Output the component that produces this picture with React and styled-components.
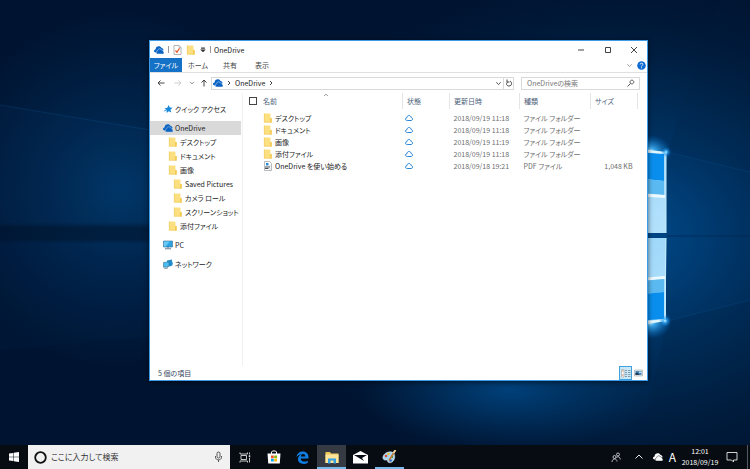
import React from 'react'
import styled, { createGlobalStyle, css } from 'styled-components'

const GlobalStyle = createGlobalStyle`
	* {
		box-sizing: border-box;
	}
	body {
		margin: 0;
		font-family: "Noto Sans CJK JP", "Open Sans", sans-serif;
		font-size: 7px;
		line-height: 12px;
		font-feature-settings: "palt";
		color: #222;
	}
	button, input {
		font: inherit;
		font-feature-settings: inherit;
		color: inherit;
		margin: 0;
		padding: 0;
		border: 0;
		background: none;
	}
	svg {
		display: block;
		flex: none;
	}
`

const Screen = styled.div`
	position: relative;
	display: flex;
	flex-direction: column;
	min-height: 100vh;
	background: #001634;
	overflow: hidden;
`
const WallpaperSvg = styled.svg`
	position: absolute;
	top: 0;
	left: 0;
	width: 100%;
	height: 100%;
`
const Desktop = styled.main`
	position: relative;
	flex: 1;
	display: flex;
	padding: 40px 102px 64px 149px;
`

/* explorer window */
const Window = styled.section`
	flex: 1;
	display: flex;
	flex-direction: column;
	min-width: 0;
	background: #fff;
	border: 1px solid #3c9be6;
	box-shadow: 0 1px 5px rgba(0, 0, 0, 0.6);
`
const TitleBar = styled.header`
	display: flex;
	align-items: center;
	height: 17px;
	padding-left: 4px;
`
const QuickTools = styled.div`
	display: flex;
	align-items: center;
	gap: 4px;
	margin-right: 3px;
`
const Divider = styled.span`
	width: 1px;
	height: 7px;
	background: #999;
`
const Title = styled.h1`
	flex: 1;
	margin: 0;
	font-size: 7px;
	font-weight: normal;
`
const IconButton = styled.button`
	display: flex;
	align-items: center;
	justify-content: center;
	flex: none;
	width: ${props => props.$width || 12}px;
	height: ${props => props.$height || 12}px;
	${props => props.$active && css`
		background: #cbe8f8;
		border: 1px solid #3fa2dc;
	`}
`
const Ribbon = styled.nav`
	display: flex;
	align-items: center;
	height: 15px;
	border-bottom: 1px solid #dfe0e1;
`
const Tab = styled.button`
	width: 32px;
	height: 14px;
	text-align: center;
	white-space: nowrap;
	color: ${props => props.$main ? '#fff' : '#444'};
	background: ${props => props.$main ? '#1572c6' : 'none'};
`
const Spacer = styled.span`
	flex: 1;
`
const NavBar = styled.div`
	display: flex;
	align-items: center;
	height: 20px;
	padding: 0 7px 0 4px;
`
const AddressBar = styled.div`
	flex: 1;
	display: flex;
	align-items: center;
	height: 13px;
	padding-left: 1px;
	border: 1px solid #d9d9d9;
`
const Crumb = styled.a`
	color: inherit;
	text-decoration: none;
`
const Refresh = styled(IconButton)`
	border-left: 1px solid #d9d9d9;
`
const SearchBox = styled.label`
	display: flex;
	align-items: center;
	width: 119px;
	height: 13px;
	margin-left: 7px;
	padding: 0 4px 0 5px;
	border: 1px solid #d9d9d9;
`
const SearchInput = styled.input`
	flex: 1;
	min-width: 0;
	height: 11px;
	outline: none;
	&::placeholder {
		color: ${props => props.$dark ? '#333' : '#777'};
		opacity: 1;
	}
`
const Body = styled.div`
	flex: 1;
	display: flex;
	min-height: 0;
`
const Sidebar = styled.nav`
	width: 93px;
	padding: 9px 1px 0 0;
	border-right: 1px solid #f1f1f1;
`
const Tree = styled.ul`
	margin: 0 0 5px;
	padding: 0;
	list-style: none;
`
const TreeItem = styled.a`
	display: flex;
	align-items: center;
	gap: 2px;
	height: 14px;
	padding-left: ${props => [13, 18, 23][props.$level]}px;
	color: inherit;
	text-decoration: none;
	white-space: nowrap;
	background: ${props => props.$selected ? '#d9d9d9' : 'none'};
`
const Files = styled.div`
	flex: 1;
	min-width: 0;
	padding-right: 9px;
`
const Table = styled.table`
	width: 100%;
	border-collapse: collapse;
	table-layout: fixed;
`
const Col = styled.col`
	width: ${props => props.$width ? props.$width + 'px' : 'auto'};
`
const HeadCell = styled.th`
	position: relative;
	height: 16px;
	padding: 0 0 0 ${props => props.$flush ? 0 : 4}px;
	font-weight: normal;
	text-align: left;
	color: #4c607a;
	border-right: ${props => props.$line ? '1px solid #e5e5e5' : 0};
`
const SortMark = styled.span`
	position: absolute;
	top: 0;
	left: 60px;
`
const Checkbox = styled.input`
	display: block;
	appearance: none;
	width: 8px;
	height: 8px;
	margin-left: 6px;
	border: 1px solid #444;
	background: #fff;
`
const Gap = styled.tr`
	height: 3px;
`
const Cell = styled.td`
	height: 12px;
	padding: 0 ${props => props.$right ? 5 : 0}px 0 ${props => props.$flush ? 0 : 4}px;
	color: ${props => props.$name ? '#222' : '#6d6d6d'};
	text-align: ${props => props.$right ? 'right' : 'left'};
	white-space: nowrap;
`
const FileName = styled.span`
	display: flex;
	align-items: center;
	gap: 2px;
`
const StatusBar = styled.footer`
	display: flex;
	align-items: center;
	height: 14px;
	padding: 0 2px 0 8px;
	color: #33475f;
`

/* taskbar */
const Taskbar = styled.footer`
	position: relative;
	display: flex;
	height: 24px;
	background: #070b12;
	color: #fff;
`
const TaskButton = styled.button`
	display: flex;
	align-items: center;
	justify-content: center;
	width: 29px;
	height: 24px;
	background: ${props => props.$active ? '#363b43' : 'none'};
	border-bottom: ${props => props.$running ? '2px solid #76b9ed' : 0};
	padding-top: ${props => props.$running ? 2 : 0}px;
`
const StartButton = styled(TaskButton)`
	width: 28px;
`
const TaskSearch = styled.label`
	display: flex;
	align-items: center;
	gap: 4px;
	width: 202px;
	padding: 0 7px 0 6px;
	background: #f1f1f1;
	color: #333;
	font-size: 8px;
`
const Tray = styled.div`
	display: flex;
	align-items: center;
	margin-left: auto;
`
const InputMode = styled.button`
	width: 13px;
	font-size: 12px;
	text-align: center;
`
const Clock = styled.time`
	width: 42px;
	line-height: 11px;
	text-align: center;
`
const ShowDesktop = styled.button`
	width: 3px;
	height: 24px;
	margin-left: 4px;
	border-left: 1px solid #565b63;
`

const Wallpaper = () => (
	<WallpaperSvg viewBox="0 0 750 469" preserveAspectRatio="none" aria-hidden="true">
		<defs>
			<radialGradient id="glow" gradientUnits="userSpaceOnUse" cx="610" cy="235" r="360" gradientTransform="translate(0 60) scale(1 0.75)">
				<stop offset="0" stopColor="#004f94" />
				<stop offset="0.25" stopColor="#003c73" />
				<stop offset="0.6" stopColor="#002850" stopOpacity="0.8" />
				<stop offset="1" stopColor="#001634" stopOpacity="0" />
			</radialGradient>
			<radialGradient id="left" gradientUnits="userSpaceOnUse" cx="120" cy="190" r="180">
				<stop offset="0" stopColor="#003566" />
				<stop offset="1" stopColor="#002a55" stopOpacity="0" />
			</radialGradient>
			<radialGradient id="floor" gradientUnits="userSpaceOnUse" cx="510" cy="390" r="150" gradientTransform="translate(0 234) scale(1 0.4)">
				<stop offset="0" stopColor="#00407a" />
				<stop offset="1" stopColor="#003566" stopOpacity="0" />
			</radialGradient>
			<radialGradient id="spark">
				<stop offset="0" stopColor="#e8fbff" />
				<stop offset="0.25" stopColor="#42b8ff" stopOpacity="0.85" />
				<stop offset="1" stopColor="#0070d0" stopOpacity="0" />
			</radialGradient>
			<linearGradient id="pane" x1="0" y1="0" x2="1" y2="1">
				<stop offset="0" stopColor="#8dd0f8" />
				<stop offset="1" stopColor="#b5e2fc" />
			</linearGradient>
			<linearGradient id="band" x1="0" y1="0" x2="0" y2="1">
				<stop offset="0" stopColor="#00142d" stopOpacity="0" />
				<stop offset="0.3" stopColor="#00142d" stopOpacity="0.6" />
				<stop offset="0.8" stopColor="#00142d" stopOpacity="0.5" />
				<stop offset="1" stopColor="#00142d" stopOpacity="0" />
			</linearGradient>
		</defs>
		<rect width="750" height="469" fill="#001431" />
		<rect width="750" height="469" fill="url(#left)" />
		<rect width="750" height="469" fill="url(#glow)" />
		<ellipse cx="510" cy="390" rx="150" ry="60" fill="url(#floor)" />
		<path d="M0 105 L150 130 V225 H0Z" fill="#0a5596" opacity="0.06" />
		<path d="M0 350 L150 337 V240 H0Z" fill="#0a5596" opacity="0.04" />
		<path d="M0 222 H150 V244 H0Z" fill="url(#band)" />
		<path d="M0 105 L150 130" stroke="#1470b8" opacity="0.2" />
		<path d="M667 152 L750 172 V0 H720Z" fill="#001d40" opacity="0.12" />
		<path d="M667 321 L750 300 V445 H640Z" fill="#001d40" opacity="0.16" />
		<path d="M667 152 L750 172 M667 321 L750 300" stroke="#1470b8" strokeWidth="1" opacity="0.16" />
		<path d="M667 236 H750" stroke="#002650" strokeWidth="2" opacity="0.35" />
		<ellipse cx="650" cy="152" rx="22" ry="17" fill="url(#spark)" />
		<ellipse cx="650" cy="322" rx="22" ry="17" fill="url(#spark)" />
		<path d="M560 147 L666 153 V233 H560Z" fill="url(#pane)" />
		<path d="M560 147 L664 154 V181 L560 170Z" fill="#0a8eed" />
		<path d="M560 170 L664 181 V195 L560 188Z" fill="#5bb9f1" />
		<path d="M560 187 L665 195 V198 L560 191Z" fill="#eefaff" />
		<path d="M560 238 H666 V321 L560 330Z" fill="url(#pane)" />
		<path d="M560 285 L665 276 V279 L560 288Z" fill="#eefaff" />
		<path d="M560 288 L664 279 V292 L560 302Z" fill="#5bb9f1" />
		<path d="M560 302 L664 292 V319 L560 326Z" fill="#0a8eed" />
		<path d="M640 149 L667 152 V154 L640 152Z M640 322 L665 319 L667 321 L640 325Z" fill="#e0f7ff" />
		<path d="M666 152 V233 M666 238 L665 321" stroke="#c4edff" strokeWidth="1" />
		<circle cx="666" cy="152" r="5" fill="url(#spark)" />
		<circle cx="665" cy="321" r="6" fill="url(#spark)" />
	</WallpaperSvg>
)

const OneDriveIcon = ({ color = '#0a64c4', edge = '#fff', size = 10 }) => (
	<svg width={size} height={size} viewBox="0 0 20 20">
		<path d="M4.500 15H3C1.200 15 0 13.500 0 12C0 10.200 1.300 9 3 8.800C3.500 5 6 2.500 9.500 2.500C12 2.500 14 3.800 15 6C17.500 6 19 8 19 10.500L10 15Z" fill={color} />
		<path d="M8 18C6 18 4.500 16.600 4.500 14.800C4.500 13 5.700 11.700 7.300 11.500C7.600 9 9.300 7.500 11.500 7.500C13.300 7.500 14.600 8.500 15.300 10C17.300 10 18.500 11.500 18.500 13C19.500 13.400 20 14.300 20 15.500C20 17 19.200 18 18 18Z" fill={color} stroke={edge} strokeWidth="0.900" />
	</svg>
)

const FolderIcon = ({ size = 10 }) => (
	<svg width={size} height={size} viewBox="0 0 20 20">
		<path d="M2 1H14L15 2V10H17V19H2Z" fill="#fbdf80" />
		<path d="M14 10H17.500V19H14Z" fill="#f3ca52" />
		<path d="M2.500 1V18.500H17" fill="none" stroke="#edc652" strokeWidth="1" />
	</svg>
)

const PropertiesIcon = () => (
	<svg width="9" height="10" viewBox="0 0 18 20">
		<path d="M2 1H12L16 5V19H2Z" fill="#fff" stroke="#8d8d8d" strokeWidth="1.300" />
		<path d="M12 1V5H16" fill="none" stroke="#8d8d8d" />
		<path d="M5 11L8 14.500L13 6.500" fill="none" stroke="#e3541e" strokeWidth="2.400" />
	</svg>
)

const PdfIcon = () => (
	<svg width="10" height="10" viewBox="0 0 20 20">
		<path d="M3 1H13L17 5V19H3Z" fill="#fff" stroke="#8b8f94" strokeWidth="1.200" />
		<path d="M6 4H11V9H6Z" fill="#2a8bd8" />
		<path d="M4 12H14M4 15H11" stroke="#49525c" strokeWidth="2" />
		<path d="M13 10H15M13 16H15" stroke="#8b8f94" strokeWidth="1.500" />
	</svg>
)

const CloudIcon = () => (
	<svg width="8" height="8" viewBox="0 0 16 16">
		<path d="M4.500 13C2.200 13 1 11.800 1 10.200C1 8.600 2.200 7.500 3.700 7.500C4 4.800 5.700 3 8 3C10.200 3 11.800 4.500 12.200 7C14 7 15 8.300 15 10C15 11.800 13.800 13 12 13Z" fill="none" stroke="#1b80d6" strokeWidth="1.900" />
	</svg>
)

const StarIcon = () => (
	<svg width="10" height="10" viewBox="0 0 20 20">
		<path d="M11.500 2L13.500 7L19 7.500L15 11.500L16.500 17L11.500 14.500L7 18L7.500 12.500L3 9L8.500 7.500Z" fill="#1688dc" />
		<path d="M2 14L7 12.500" stroke="#4aa7e6" strokeWidth="2" />
	</svg>
)

const PcIcon = () => (
	<svg width="10" height="10" viewBox="0 0 20 20">
		<path d="M1 2H19V14H1Z" fill="#2ba2e4" stroke="#3a7190" strokeWidth="1.200" />
		<path d="M2 3H14L5 13H2Z" fill="#66caf5" />
		<path d="M8 14H12V16H8Z" fill="#8aa4b2" />
		<path d="M4 17.500H16" stroke="#5f7f90" strokeWidth="2" />
	</svg>
)

const NetworkIcon = () => (
	<svg width="10" height="10" viewBox="0 0 20 20">
		<path d="M8 3L18 1V12L8 14Z" fill="#2d86bf" />
		<circle cx="14" cy="9" r="5.500" fill="#1f8fd0" />
		<path d="M1 7L12 5.500V15L1 16.500Z" fill="#4bbcf0" stroke="#2b6f99" strokeWidth="1.200" />
		<path d="M3 19L10 17.500" stroke="#5b7d92" strokeWidth="2" />
	</svg>
)

const LineIcon = ({ d, size = 8, color = '#444', width = 2 }) => (
	<svg width={size} height={size} viewBox="0 0 16 16">
		<path d={d} fill="none" stroke={color} strokeWidth={width} />
	</svg>
)

const chevronDown = 'M3 5L8 10.500L13 5'
const chevronRight = 'M6 4L10 8L6 12'
const arrowLeft = 'M15 8H2M7 3L2 8L7 13'
const arrowRight = 'M1 8H14M9 3L14 8L9 13'
const arrowUp = 'M8 15V2M3 7L8 2L13 7'

const HelpIcon = () => (
	<svg width="9" height="9" viewBox="0 0 18 18">
		<circle cx="9" cy="9" r="8.500" fill="#0a6ad0" />
		<path d="M6.300 7C6.300 3.500 11.800 3.500 11.800 6.800C11.800 9 9 8.700 9 11M9 12.500V14.500" fill="none" stroke="#fff" strokeWidth="1.800" />
	</svg>
)

const DetailsViewIcon = () => (
	<svg width="10" height="9" viewBox="0 0 20 18">
		<path d="M1 1H6V16H1Z" fill="#fff" stroke="#8e8e8e" />
		<path d="M2 4H5M2 12H5" stroke="#d78067" strokeWidth="2" />
		<path d="M8 3H12M14 3H19M8 7H12M14 7H19M8 11H12M14 11H19M8 15H12M14 15H19" stroke="#68818f" strokeWidth="1.500" />
	</svg>
)

const LargeViewIcon = () => (
	<svg width="9" height="8" viewBox="0 0 18 16">
		<path d="M1 2H17V14H1Z" fill="#e9eef2" stroke="#8b949b" />
		<path d="M3 4H15V12H3Z" fill="#4b88b8" />
		<path d="M3 12V8L7 7L11 12Z" fill="#1f3a54" />
		<path d="M10 5H15V8H10Z" fill="#b7dcf3" />
	</svg>
)

const WindowsIcon = () => (
	<svg width="10" height="10" viewBox="0 0 20 20" fill="#fff">
		<path d="M0 3L8.500 1.800V9.500H0Z M9.500 1.600L20 0V9.500H9.500Z M0 10.500H8.500V18.200L0 17Z M9.500 10.500H20V20L9.500 18.400Z" />
	</svg>
)

const CortanaIcon = () => (
	<svg width="13" height="13" viewBox="0 0 13 13">
		<circle cx="6.500" cy="6.500" r="5.300" fill="none" stroke="#111" strokeWidth="1.800" />
	</svg>
)

const MicIcon = () => (
	<svg width="9" height="12" viewBox="0 0 18 24" fill="none" stroke="#444" strokeWidth="1.800">
		<rect x="6" y="2" width="6" height="12" rx="3" />
		<path d="M3 10V13C3 19 15 19 15 13V10M9 18V22" />
	</svg>
)

const TaskViewIcon = () => (
	<svg width="12" height="11" viewBox="0 0 24 22" fill="none" stroke="#dcdcdc" strokeWidth="1.800">
		<path d="M4 7H15V15H4Z M2 1V4H17V1 M2 21V18H17V21 M21 1V5 M21 12V21" />
		<path d="M21 6.500V10.500" strokeWidth="3" />
	</svg>
)

const StoreIcon = () => (
	<svg width="14" height="14" viewBox="0 0 28 28">
		<path d="M9 8V4C9 1 19 1 19 4V8" fill="none" stroke="#fff" strokeWidth="2" />
		<path d="M1 7H27L25.500 27H2.500Z" fill="#fff" />
		<path d="M8 11H13.500V16.500H8Z" fill="#f25022" />
		<path d="M14.500 11H20V16.500H14.500Z" fill="#7fba00" />
		<path d="M8 17.500H13.500V23H8Z" fill="#00a4ef" />
		<path d="M14.500 17.500H20V23H14.500Z" fill="#ffb900" />
	</svg>
)

const EdgeIcon = () => (
	<svg width="13" height="13" viewBox="0 0 26 26">
		<path d="M1 12C2 5 7 1 13.500 1C21 1 25 6 25 12.500V15H9.500C9.700 22 18 22.500 23.500 19.300V24C15 28 4 25.500 4 16C4 11.500 7 8 11 6.500C6.500 7 3 9 1 12ZM9.700 10.800H18.500C18.500 4.500 10.400 4.800 9.700 10.800Z" fill="#0f7ee0" />
	</svg>
)

const ExplorerIcon = () => (
	<svg width="14" height="13" viewBox="0 0 28 26">
		<path d="M1 2H10L12 5H27V24H1Z" fill="#f0c75b" />
		<path d="M1 7H27V24H1Z" fill="#fde59c" />
		<path d="M6 25V15H22V25H17V19H11V25Z" fill="#35a0e4" />
	</svg>
)

const MailIcon = () => (
	<svg width="15" height="13" viewBox="0 0 30 26">
		<path d="M0 8L15 0L30 8V25H0Z" fill="#fff" />
		<path d="M2 8H28L18 14L22 20L12 14Z" fill="#070b12" />
	</svg>
)

const PaintIcon = () => (
	<svg width="15" height="14" viewBox="0 0 30 28">
		<path d="M13 4C23 2 27 9 25 17C23 26 12 28 11 22C10 18 8 21 5 20C-2 17 3 6 13 4Z" fill="#a9d4ee" stroke="#e9f5fb" />
		<circle cx="8" cy="12" r="2.500" fill="#d84a2d" />
		<circle cx="13" cy="8" r="2.300" fill="#f5c021" />
		<circle cx="20" cy="14" r="2.300" fill="#3a9b43" />
		<circle cx="17" cy="21" r="2.500" fill="#265fbd" />
		<path d="M14 21L24 5" stroke="#c9772f" strokeWidth="3" />
		<path d="M23 6L27 0" stroke="#f4d6a0" strokeWidth="4" />
	</svg>
)

const PeopleIcon = () => (
	<svg width="10" height="11" viewBox="0 0 20 22" fill="none" stroke="#e4e4e4" strokeWidth="1.600">
		<circle cx="14" cy="5" r="3" />
		<circle cx="7" cy="10" r="3" />
		<path d="M2 20C2 12 12 12 12 19M10.500 11C14 8 18.500 10 18.500 15" />
	</svg>
)

const NotificationIcon = () => (
	<svg width="12" height="12" viewBox="0 0 24 24">
		<path d="M2 3H22V18H15V22L11 18H2Z" fill="none" stroke="#e8e8e8" strokeWidth="1.800" />
	</svg>
)

const treeGroups = [
	[{ name: 'クイック アクセス', level: 0, icon: <StarIcon /> }],
	[
		{ name: 'OneDrive', level: 0, icon: <OneDriveIcon edge="#d9d9d9" />, selected: true },
		{ name: 'デスクトップ', level: 1 },
		{ name: 'ドキュメント', level: 1 },
		{ name: '画像', level: 1 },
		{ name: 'Saved Pictures', level: 2 },
		{ name: 'カメラ ロール', level: 2 },
		{ name: 'スクリーンショット', level: 2 },
		{ name: '添付ファイル', level: 1 },
	],
	[{ name: 'PC', level: 0, icon: <PcIcon /> }],
	[{ name: 'ネットワーク', level: 0, icon: <NetworkIcon /> }],
]

const files = [
	{ name: 'デスクトップ', date: '2018/09/19 11:18', type: 'ファイル フォルダー' },
	{ name: 'ドキュメント', date: '2018/09/19 11:18', type: 'ファイル フォルダー' },
	{ name: '画像', date: '2018/09/19 11:19', type: 'ファイル フォルダー' },
	{ name: '添付ファイル', date: '2018/09/19 11:18', type: 'ファイル フォルダー' },
	{ name: 'OneDrive を使い始める', date: '2018/09/18 19:21', type: 'PDF ファイル', size: '1,048 KB', icon: <PdfIcon /> },
]

function FileTable() {
	return (
		<Table>
			<colgroup>
				<Col $width={20} />
				<Col />
				<Col $width={47} />
				<Col $width={70} />
				<Col $width={71} />
				<Col $width={47} />
			</colgroup>
			<thead>
				<tr>
					<HeadCell $flush><Checkbox type="checkbox" aria-label="すべて選択" /></HeadCell>
					<HeadCell $flush $line>
						名前
						<SortMark><LineIcon d="M3 8L8 3L13 8" size={6} color="#777" /></SortMark>
					</HeadCell>
					<HeadCell $line>状態</HeadCell>
					<HeadCell $line>更新日時</HeadCell>
					<HeadCell $line>種類</HeadCell>
					<HeadCell $line>サイズ</HeadCell>
				</tr>
			</thead>
			<tbody>
				<Gap />
				{files.map(file => (
					<tr key={file.name}>
						<Cell />
						<Cell $name $flush>
							<FileName>{file.icon || <FolderIcon />}{file.name}</FileName>
						</Cell>
						<Cell $flush><FileName><span /><CloudIcon /></FileName></Cell>
						<Cell>{file.date}</Cell>
						<Cell>{file.type}</Cell>
						<Cell $right>{file.size}</Cell>
					</tr>
				))}
			</tbody>
		</Table>
	)
}

function Explorer() {
	return (
		<Window aria-label="OneDrive">
			<TitleBar>
				<QuickTools>
					<OneDriveIcon />
					<Divider />
					<PropertiesIcon />
					<FolderIcon />
					<LineIcon d="M3 3H13M4 8L8 12L12 8Z" size={6} color="#333" width={3} />
					<Divider />
				</QuickTools>
				<Title>OneDrive</Title>
				<IconButton $width={27} aria-label="最小化"><LineIcon d="M2 8H14" /></IconButton>
				<IconButton $width={27} aria-label="最大化"><LineIcon d="M3 3H13V13H3Z" /></IconButton>
				<IconButton $width={26} aria-label="閉じる"><LineIcon d="M2 2L14 14M14 2L2 14" /></IconButton>
			</TitleBar>
			<Ribbon>
				<Tab $main>ファイル</Tab>
				<Tab>ホーム</Tab>
				<Tab>共有</Tab>
				<Tab>表示</Tab>
				<Spacer />
				<IconButton aria-label="リボンの展開"><LineIcon d={chevronDown} size={7} color="#999" /></IconButton>
				<IconButton aria-label="ヘルプ"><HelpIcon /></IconButton>
			</Ribbon>
			<NavBar>
				<IconButton $width={14} aria-label="戻る"><LineIcon d={arrowLeft} /></IconButton>
				<IconButton $width={20} aria-label="進む"><LineIcon d={arrowRight} color="#ccc" /></IconButton>
				<IconButton $width={8} aria-label="最近表示した場所"><LineIcon d={chevronDown} size={6} color="#777" /></IconButton>
				<IconButton $width={15} aria-label="上へ"><LineIcon d={arrowUp} /></IconButton>
				<AddressBar>
					<OneDriveIcon />
					<IconButton aria-label="フォルダー"><LineIcon d={chevronRight} /></IconButton>
					<Crumb href="#onedrive">OneDrive</Crumb>
					<IconButton aria-label="サブフォルダー"><LineIcon d={chevronRight} /></IconButton>
					<Spacer />
					<IconButton $width={10} aria-label="以前の場所"><LineIcon d={chevronDown} size={7} /></IconButton>
					<Refresh $width={10} $height={11} aria-label="更新"><LineIcon d="M4 1V6H9M5 6C1 10 4 14 8 14C14 14 15 7 10 4" /></Refresh>
				</AddressBar>
				<SearchBox>
					<SearchInput type="text" placeholder="OneDriveの検索" aria-label="OneDriveの検索" />
					<LineIcon d="M1 15L7 9M7 9C4 4 9 1 12 3C16 6 12 12 7 9" color="#555" />
				</SearchBox>
			</NavBar>
			<Body>
				<Sidebar>
					{treeGroups.map(group => (
						<Tree key={group[0].name}>
							{group.map(item => (
								<li key={item.name}>
									<TreeItem href="#folder" $level={item.level} $selected={item.selected}>
										{item.icon || <FolderIcon />}
										{item.name}
									</TreeItem>
								</li>
							))}
						</Tree>
					))}
				</Sidebar>
				<Files><FileTable /></Files>
			</Body>
			<StatusBar>
				5 個の項目
				<Spacer />
				<IconButton $width={13} $height={14} $active aria-label="詳細表示"><DetailsViewIcon /></IconButton>
				<IconButton $width={13} aria-label="大アイコン"><LargeViewIcon /></IconButton>
			</StatusBar>
		</Window>
	)
}

export default function App() {
	return (
		<Screen>
			<GlobalStyle />
			<Wallpaper />
			<Desktop>
				<Explorer />
			</Desktop>
			<Taskbar>
				<StartButton aria-label="スタート"><WindowsIcon /></StartButton>
				<TaskSearch>
					<CortanaIcon />
					<SearchInput $dark type="text" placeholder="ここに入力して検索" aria-label="ここに入力して検索" />
					<MicIcon />
				</TaskSearch>
				<TaskButton aria-label="タスク ビュー"><TaskViewIcon /></TaskButton>
				<TaskButton aria-label="ストア"><StoreIcon /></TaskButton>
				<TaskButton aria-label="Edge"><EdgeIcon /></TaskButton>
				<TaskButton $active $running aria-label="エクスプローラー"><ExplorerIcon /></TaskButton>
				<TaskButton aria-label="メール"><MailIcon /></TaskButton>
				<TaskButton $running aria-label="ペイント"><PaintIcon /></TaskButton>
				<Tray>
					<IconButton $width={24} aria-label="People"><PeopleIcon /></IconButton>
					<IconButton $width={22} aria-label="隠れているインジケーター"><LineIcon d="M1 11L8 4L15 11" color="#e8e8e8" /></IconButton>
					<IconButton $width={16} aria-label="OneDrive"><OneDriveIcon color="#fff" edge="#070b12" /></IconButton>
					<InputMode aria-label="入力モード">A</InputMode>
					<Clock dateTime="2018-09-19T12:01">12:01<br />2018/09/19</Clock>
					<IconButton $width={22} aria-label="通知"><NotificationIcon /></IconButton>
					<ShowDesktop aria-label="デスクトップの表示" />
				</Tray>
			</Taskbar>
		</Screen>
	)
}
